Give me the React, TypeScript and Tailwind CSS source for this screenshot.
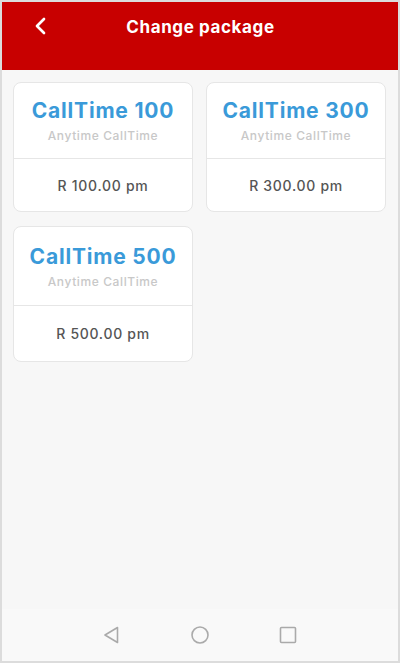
import React from "react";

const packages = [
  { name: "CallTime 100", price: "R 100.00 pm", tall: false },
  { name: "CallTime 300", price: "R 300.00 pm", tall: false },
  { name: "CallTime 500", price: "R 500.00 pm", tall: true },
];

export default function App() {
  return (
    <div
      className="w-[400px] h-[663px] border-2 border-[#dcdcdc] bg-[#f7f7f7] flex flex-col overflow-hidden"
      style={{ fontFamily: "Inter, 'Open Sans', sans-serif" }}
    >
      <div className="h-[68px] bg-[#c80000] shrink-0">
        <div className="h-12 pt-[3px] flex items-center relative">
          <svg
            className="absolute left-[30px] top-[15px]"
            width="16"
            height="18"
            viewBox="0 0 16 18"
            fill="none"
          >
            <path d="M12 2 L5 9 L12 16" stroke="white" strokeWidth="2.7" strokeLinecap="round" strokeLinejoin="round" />
          </svg>
          <div className="w-full text-center text-white font-bold text-[17px] tracking-[0.6px] pl-[1px]">
            Change package
          </div>
        </div>
      </div>
      <div className="flex-1 pt-3 pl-[11px] pr-[12px]">
        <div className="grid grid-cols-2 gap-x-[13px] gap-y-[14px] items-start">
          {packages.map((p) => (
            <div
              key={p.name}
              className={`bg-white border border-[#e6e6e6] rounded-lg flex flex-col ${p.tall ? "h-[136px]" : "h-[130px]"}`}
            >
              <div
                className={`flex flex-col items-center border-b border-[#e6e6e6] ${p.tall ? "h-[79px] pt-[16px]" : "h-[76px] pt-[14px]"}`}
              >
                <div className="text-[21px] leading-[28px] font-bold text-[#3a9ad9] tracking-[0.8px]">{p.name}</div>
                <div className="mt-[3px] text-[12px] leading-[16px] text-[#c8c8c8] font-medium tracking-[0.6px]">Anytime CallTime</div>
              </div>
              <div className="flex-1 flex items-center justify-center text-[14px] font-medium text-[#555] tracking-[0.7px]">
                {p.price}
              </div>
            </div>
          ))}
        </div>
      </div>
      <div className="h-[52px] shrink-0 bg-[#f9f9f9] relative">
        <div className="absolute left-[101px] top-[17px]">
          <svg width="17" height="18" viewBox="0 0 17 18" fill="none">
            <path d="M14.5 1.5 L2 9 L14.5 16.5 Z" stroke="#aaaaaa" strokeWidth="1.6" strokeLinejoin="round" />
          </svg>
        </div>
        <div className="absolute left-[189px] top-[17px]">
          <svg width="18" height="18" viewBox="0 0 18 18" fill="none">
            <circle cx="9" cy="9" r="8" stroke="#aaaaaa" strokeWidth="1.6" />
          </svg>
        </div>
        <div className="absolute left-[277px] top-[17px]">
          <svg width="18" height="18" viewBox="0 0 18 18" fill="none">
            <rect x="1.5" y="1.5" width="15" height="15" rx="1" stroke="#aaaaaa" strokeWidth="1.6" />
          </svg>
        </div>
      </div>
    </div>
  );
}
